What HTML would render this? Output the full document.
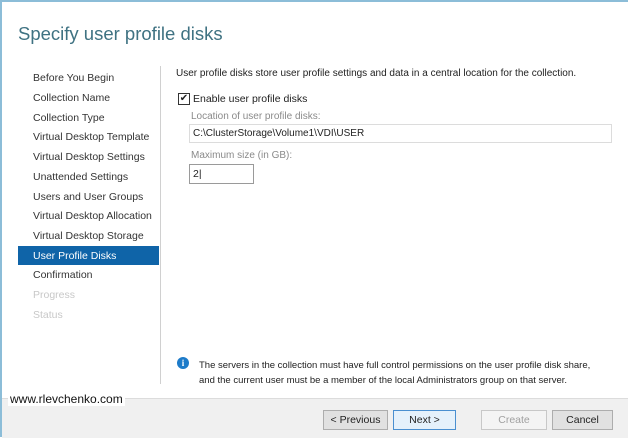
<!DOCTYPE html>
<html><head><style>
body{margin:0;width:628px;height:437px;overflow:hidden;background:#fff;font-family:"Liberation Sans",sans-serif;position:relative;font-size:10.5px;color:#222}
.a{position:absolute;white-space:nowrap}
.nav{left:33px;color:#333}
.btn{position:absolute;top:410px;height:18px;border:1px solid #adadad;background:#e1e1e1;font-size:10.5px;text-align:center;line-height:18px;color:#222}
</style></head><body>
<div class="a" style="left:0;top:0;width:628px;height:2px;background:#8cbdd8"></div>
<div class="a" style="left:0;top:0;width:2px;height:437px;background:#8cbdd8"></div>
<div class="a" style="left:18px;top:23px;font-size:18.5px;color:#3f7282">Specify user profile disks</div>
<div class="a nav" style="top:72px">Before You Begin</div>
<div class="a nav" style="top:92px">Collection Name</div>
<div class="a nav" style="top:112px">Collection Type</div>
<div class="a nav" style="top:131px">Virtual Desktop Template</div>
<div class="a nav" style="top:151px">Virtual Desktop Settings</div>
<div class="a nav" style="top:171px">Unattended Settings</div>
<div class="a nav" style="top:191px">Users and User Groups</div>
<div class="a nav" style="top:210px">Virtual Desktop Allocation</div>
<div class="a nav" style="top:230px">Virtual Desktop Storage</div>
<div class="a" style="left:18px;top:246px;width:141px;height:19px;background:#0f64a8"></div>
<div class="a nav" style="top:250px;color:#fff">User Profile Disks</div>
<div class="a nav" style="top:269px">Confirmation</div>
<div class="a nav" style="top:289px;color:#c8c8c8">Progress</div>
<div class="a nav" style="top:309px;color:#c8c8c8">Status</div>
<div class="a" style="left:160px;top:66px;width:1px;height:318px;background:#d0d0d0"></div>
<div class="a" style="left:176px;top:68px;font-size:10px">User profile disks store user profile settings and data in a central location for the collection.</div>
<div class="a" style="left:178px;top:93px;width:10px;height:10px;border:1px solid #333;background:#fff;font-size:10px;line-height:10px;text-align:center">✔</div>
<div class="a" style="left:193px;top:93px">Enable user profile disks</div>
<div class="a" style="left:191px;top:111px;color:#8a8a8a;font-size:10px">Location of user profile disks:</div>
<div class="a" style="left:189px;top:124px;height:17px;border:1px solid #dcdcdc;line-height:17px;padding-left:3px;width:418px;font-size:10px">C:\ClusterStorage\Volume1\VDI\USER</div>
<div class="a" style="left:191px;top:150px;color:#8a8a8a;font-size:10px">Maximum size (in GB):</div>
<div class="a" style="left:189px;top:164px;width:60px;height:18px;border:1px solid #9a9a9a;line-height:18px;padding-left:3px">2|</div>
<div class="a" style="left:177px;top:357px;width:12px;height:12px;border-radius:50%;background:#1d7bc9;color:#fff;font-weight:bold;font-size:9px;text-align:center;line-height:12px;font-family:'Liberation Serif',serif">i</div>
<div class="a" style="left:199px;top:358px;line-height:15px;font-size:9.5px">The servers in the collection must have full control permissions on the user profile disk share,<br>and the current user must be a member of the local Administrators group on that server.</div>
<div class="a" style="left:2px;top:398px;width:626px;height:39px;background:#f0f0f0;border-top:1px solid #dcdcdc"></div>
<div class="a" style="left:8px;top:392px;font-size:12px;color:#111;background:#fff;padding:0 2px">www.rlevchenko.com</div>
<div class="btn" style="left:323px;width:63px">&lt; Previous</div>
<div class="btn" style="left:393px;width:61px;border-color:#4a8fd0;background:#e5f1fb">Next &gt;</div>
<div class="btn" style="left:481px;width:64px;color:#a0a0a0;border-color:#c8c8c8;background:#f4f4f4">Create</div>
<div class="btn" style="left:552px;width:59px">Cancel</div>
</body></html>
